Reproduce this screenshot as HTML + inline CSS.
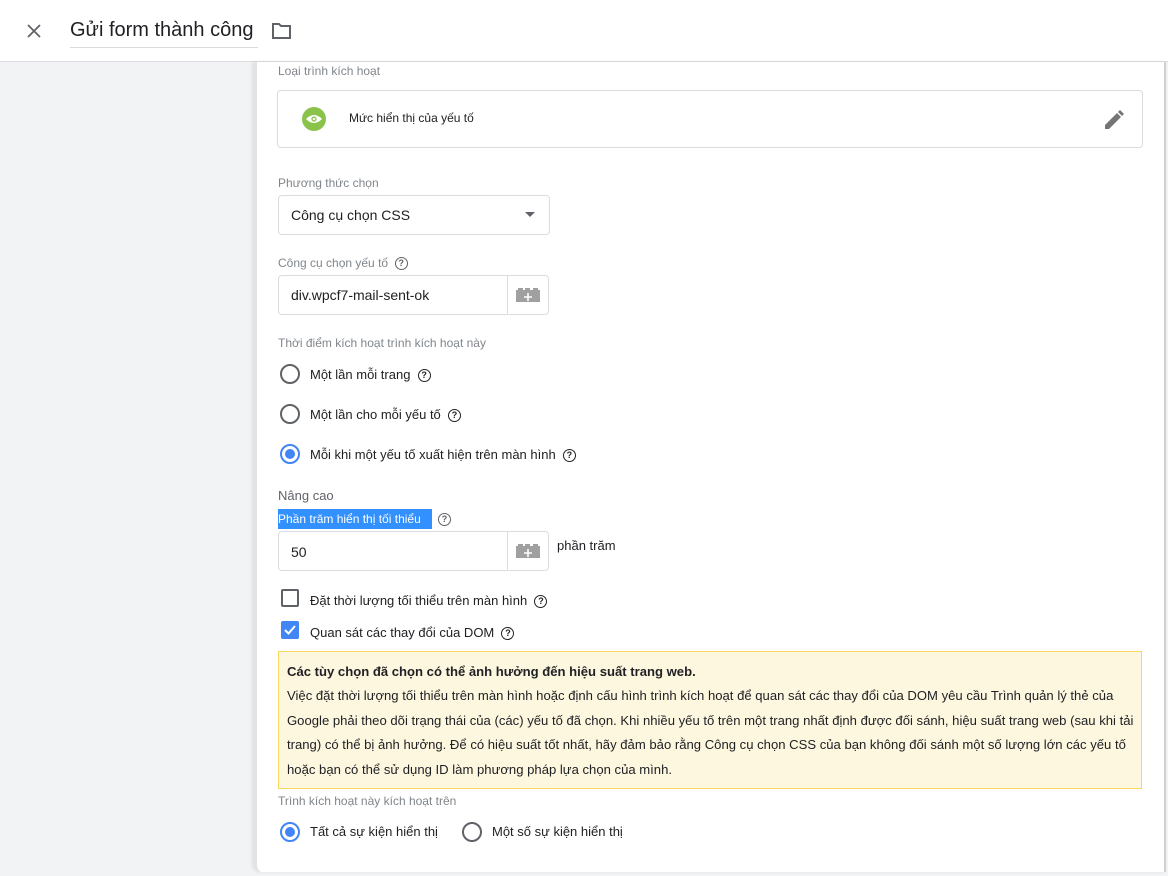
<!DOCTYPE html>
<html><head><meta charset="utf-8"><style>
*{box-sizing:border-box;margin:0;padding:0}
body{width:1168px;height:876px;overflow:hidden;background:#f1f3f4;font-family:"Liberation Sans",Arial,sans-serif;color:#202124;position:relative}
.hdr{position:absolute;left:0;top:0;width:1168px;height:62px;background:#fff;border-bottom:1px solid #dadce0}
.panel{position:absolute;left:254px;top:62px;width:912px;height:810px;background:#fff;border-left:3px solid #e3e3e3;border-right:2px solid #d0d0d0;border-bottom-left-radius:8px;box-shadow:-2px 0 3px rgba(0,0,0,.08)}
.a{position:absolute}
.lbl{font-size:12px;color:#80868b}
.t{font-size:13px;color:#202124}
.box{border:1px solid #dadce0;border-radius:4px;background:#fff}
.q{display:inline-block;width:13px;height:13px;border:1.5px solid #202124;border-radius:50%;font-size:9px;font-weight:bold;text-align:center;line-height:10px;vertical-align:middle}
.radio{width:20px;height:20px;border:2px solid #5f6368;border-radius:50%}
.radio.on{border-color:#4285f4}
.radio.on::after{content:"";position:absolute;left:3px;top:3px;width:10px;height:10px;border-radius:50%;background:#4285f4}
.warn div{white-space:nowrap;height:24.4px}
</style></head><body>
<div class="hdr">
 <svg class="a" style="left:26px;top:23px" width="16" height="16" viewBox="0 0 16 16"><path d="M2 2L14 14M14 2L2 14" stroke="#5f6368" stroke-width="1.8"/></svg>
 <div class="a" style="left:70px;top:19px;font-size:20px;color:#202124;border-bottom:1px solid #dadce0;padding-bottom:5px;width:188px">Gửi form thành công</div>
 <svg class="a" style="left:271px;top:22px" width="22" height="18" viewBox="0 0 22 18"><path d="M2 2h6l2 2h9v12H2z" fill="none" stroke="#5f6368" stroke-width="2"/></svg>
</div>
<div class="panel"></div>
<div class="a lbl" style="left:278px;top:64px">Loại trình kích hoạt</div>
<div class="a box" style="left:277px;top:90px;width:866px;height:58px"></div>
<div class="a" style="left:302px;top:107px;width:24px;height:24px;border-radius:50%;background:#8bc34a"></div>
<svg class="a" style="left:305px;top:113px" width="18" height="12" viewBox="0 0 18 12"><path d="M1 6Q9-2 17 6Q9 14 1 6z" fill="#fff"/><circle cx="9" cy="6" r="2.6" fill="#8bc34a"/><circle cx="9" cy="6" r="1.3" fill="#fff"/></svg>
<div class="a t" style="left:349px;top:111px;font-size:12px">Mức hiển thị của yếu tố</div>
<svg class="a" style="left:1104px;top:110px" width="20" height="20" viewBox="0 0 20 20"><path d="M1 19v-4L13 3l4 4L5 19z" fill="#757575"/><path d="M14 2l2-2 4 4-2 2z" fill="#757575"/></svg>
<div class="a lbl" style="left:278px;top:176px">Phương thức chọn</div>
<div class="a box" style="left:278px;top:195px;width:272px;height:40px"></div>
<div class="a t" style="left:291px;top:207px;font-size:14px">Công cụ chọn CSS</div>
<div class="a" style="left:525px;top:212px;border-left:5px solid transparent;border-right:5px solid transparent;border-top:5px solid #5f6368"></div>
<div class="a lbl" style="left:278px;top:256px">Công cụ chọn yếu tố &nbsp;<span class="q" style="border-color:#5f6368;color:#5f6368">?</span></div>
<div class="a box" style="left:278px;top:275px;width:271px;height:40px"><div class="a" style="left:228px;top:0;width:1px;height:38px;background:#dadce0"></div></div>
<div class="a t" style="left:291px;top:287px;font-size:14px">div.wpcf7-mail-sent-ok</div>
<svg class="a" style="left:516px;top:288px" width="24" height="14" viewBox="0 0 24 14"><rect x="0" y="2" width="24" height="12" fill="#a0a0a0"/><rect x="2" y="0" width="5" height="3" fill="#a0a0a0"/><rect x="9" y="0" width="5" height="3" fill="#a0a0a0"/><rect x="17" y="0" width="5" height="3" fill="#a0a0a0"/><path d="M12 5v8M8 9h8" stroke="#fff" stroke-width="1.6"/></svg>
<div class="a lbl" style="left:278px;top:336px">Thời điểm kích hoạt trình kích hoạt này</div>
<div class="a radio" style="left:280px;top:364px"></div><div class="a t" style="left:310px;top:367px">Một lần mỗi trang &nbsp;<span class="q">?</span></div>
<div class="a radio" style="left:280px;top:404px"></div><div class="a t" style="left:310px;top:407px">Một lần cho mỗi yếu tố &nbsp;<span class="q">?</span></div>
<div class="a radio on" style="left:280px;top:444px"></div><div class="a t" style="left:310px;top:447px">Mỗi khi một yếu tố xuất hiện trên màn hình &nbsp;<span class="q">?</span></div>
<div class="a" style="left:278px;top:488px;font-size:13px;color:#5f6368">Nâng cao</div>
<div class="a" style="left:278px;top:509px;height:20px;width:154px;background:#3390ff"></div>
<div class="a" style="left:278px;top:512px;font-size:12px;color:#fff">Phần trăm hiển thị tối thiểu</div>
<span class="a q" style="left:438px;top:513px;border-color:#5f6368;color:#5f6368">?</span>
<div class="a box" style="left:278px;top:531px;width:271px;height:40px"><div class="a" style="left:228px;top:0;width:1px;height:38px;background:#dadce0"></div></div>
<div class="a t" style="left:291px;top:544px;font-size:14px">50</div>
<svg class="a" style="left:516px;top:544px" width="24" height="14" viewBox="0 0 24 14"><rect x="0" y="2" width="24" height="12" fill="#a0a0a0"/><rect x="2" y="0" width="5" height="3" fill="#a0a0a0"/><rect x="9" y="0" width="5" height="3" fill="#a0a0a0"/><rect x="17" y="0" width="5" height="3" fill="#a0a0a0"/><path d="M12 5v8M8 9h8" stroke="#fff" stroke-width="1.6"/></svg>
<div class="a t" style="left:557px;top:538px">phần trăm</div>
<div class="a" style="left:281px;top:589px;width:18px;height:18px;border:2px solid #5f6368;border-radius:2px"></div>
<div class="a t" style="left:310px;top:593px">Đặt thời lượng tối thiểu trên màn hình &nbsp;<span class="q">?</span></div>
<div class="a" style="left:281px;top:621px;width:18px;height:18px;background:#4285f4;border-radius:2px"></div>
<svg class="a" style="left:283px;top:623px" width="14" height="14" viewBox="0 0 14 14"><path d="M2 7l3.5 3.5L12 3" fill="none" stroke="#fff" stroke-width="2"/></svg>
<div class="a t" style="left:310px;top:625px">Quan sát các thay đổi của DOM &nbsp;<span class="q">?</span></div>
<div class="a" style="left:278px;top:651px;width:864px;height:138px;background:#fef7e0;border:1px solid #fdd663"></div>
<div class="a warn" style="left:287px;top:660px;font-size:13.1px;line-height:24.4px;color:#202124">
<div><b>Các tùy chọn đã chọn có thể ảnh hưởng đến hiệu suất trang web.</b></div>
<div>Việc đặt thời lượng tối thiểu trên màn hình hoặc định cấu hình trình kích hoạt để quan sát các thay đổi của DOM yêu cầu Trình quản lý thẻ của</div>
<div>Google phải theo dõi trạng thái của (các) yếu tố đã chọn. Khi nhiều yếu tố trên một trang nhất định được đối sánh, hiệu suất trang web (sau khi tải</div>
<div>trang) có thể bị ảnh hưởng. Để có hiệu suất tốt nhất, hãy đảm bảo rằng Công cụ chọn CSS của bạn không đối sánh một số lượng lớn các yếu tố</div>
<div>hoặc bạn có thể sử dụng ID làm phương pháp lựa chọn của mình.</div>
</div>
<div class="a lbl" style="left:278px;top:794px">Trình kích hoạt này kích hoạt trên</div>
<div class="a radio on" style="left:280px;top:822px"></div><div class="a t" style="left:310px;top:824px">Tất cả sự kiện hiển thị</div>
<div class="a radio" style="left:462px;top:822px"></div><div class="a t" style="left:492px;top:824px">Một số sự kiện hiển thị</div>
</body></html>
